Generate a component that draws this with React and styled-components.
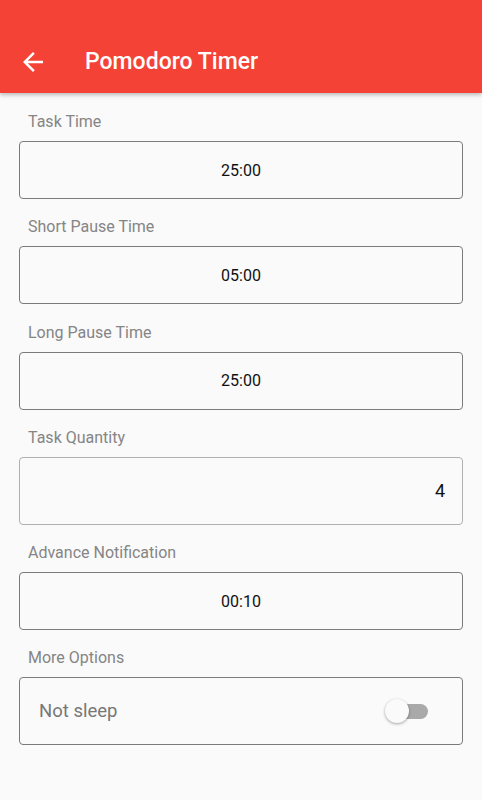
import React, { useState } from "react"
import styled, { createGlobalStyle } from "styled-components"

const GlobalStyle = createGlobalStyle`
  html, body {
    margin: 0;
    padding: 0;
    background: #fafafa;
    font-family: Roboto, "Noto Sans", "Liberation Sans", sans-serif;
  }
`

const Page = styled.div`
  width: 482px;
  min-height: 800px;
  background: #fafafa;
`

const AppBar = styled.header`
  height: 93px;
  box-sizing: border-box;
  padding-top: 47px;
  background: #f44336;
  box-shadow: 0 2px 4px rgba(0, 0, 0, 0.25);
  display: flex;
  align-items: flex-start;
  position: relative;
  z-index: 1;
`

const BackButton = styled.button`
  width: 30px;
  height: 30px;
  margin-left: 18px;
  padding: 0;
  border: none;
  background: none;
  display: flex;
  align-items: center;
  justify-content: center;
  cursor: pointer;
`

const Title = styled.h1`
  margin: 0 0 0 37px;
  font-size: 23px;
  line-height: 30px;
  font-weight: 500;
  color: #fff;
`

const Content = styled.main`
  padding: 19px 19px 0 19px;
  display: flex;
  flex-direction: column;
`

const Section = styled.section`
  display: flex;
  flex-direction: column;
  margin-bottom: 18.3px;
`

const Label = styled.div`
  padding-left: 9px;
  font-size: 16px;
  line-height: 20px;
  color: #858585;
  margin-bottom: 9px;
`

const Field = styled.div`
  box-sizing: border-box;
  height: ${({ tall }) => (tall ? "68px" : "58px")};
  border: 1px solid ${({ light }) => (light ? "#b0b0b0" : "#7a7a7a")};
  border-radius: 4px;
  display: flex;
  align-items: center;
  justify-content: ${({ align }) => align || "center"};
  padding: 0 ${({ align }) => (align === "flex-end" ? "17px" : "19px")};
  font-size: ${({ big }) => (big ? "18px" : "16px")};
  color: #111;
`

const OptionText = styled.span`
  font-size: 18.5px;
  color: #777;
  flex: 1;
`

const SwitchTrack = styled.button`
  position: relative;
  width: 39px;
  height: 15px;
  margin-right: 15px;
  padding: 0;
  border: none;
  border-radius: 8px;
  background: ${({ on }) => (on ? "#f8a29c" : "#a9a9a9")};
  cursor: pointer;
`

const SwitchThumb = styled.span`
  position: absolute;
  top: -5px;
  left: ${({ on }) => (on ? "19px" : "-4px")};
  width: 24px;
  height: 24px;
  border-radius: 50%;
  background: ${({ on }) => (on ? "#f44336" : "#fafafa")};
  box-shadow: 0 1px 3px rgba(0, 0, 0, 0.35);
`

const BackArrow = () => (
  <svg width="30" height="30" viewBox="0 0 24 24">
    <path
      fill="#fff"
      d="M20 11H7.83l5.59-5.59L12 4l-8 8 8 8 1.41-1.41L7.83 13H20v-2z"
    />
  </svg>
)

const fields = [
  { label: "Task Time", value: "25:00" },
  { label: "Short Pause Time", value: "05:00" },
  { label: "Long Pause Time", value: "25:00" },
  { label: "Task Quantity", value: "4", quantity: true },
  { label: "Advance Notification", value: "00:10" },
]

export default function App() {
  const [noSleep, setNoSleep] = useState(false)

  return (
    <Page>
      <GlobalStyle />
      <AppBar>
        <BackButton aria-label="Back">
          <BackArrow />
        </BackButton>
        <Title>Pomodoro Timer</Title>
      </AppBar>
      <Content>
        {fields.map((f) => (
          <Section key={f.label}>
            <Label>{f.label}</Label>
            {f.quantity ? (
              <Field tall light big align="flex-end">
                {f.value}
              </Field>
            ) : (
              <Field>{f.value}</Field>
            )}
          </Section>
        ))}
        <Section>
          <Label>More Options</Label>
          <Field tall align="space-between">
            <OptionText>Not sleep</OptionText>
            <SwitchTrack on={noSleep} onClick={() => setNoSleep(!noSleep)}>
              <SwitchThumb on={noSleep} />
            </SwitchTrack>
          </Field>
        </Section>
      </Content>
    </Page>
  )
}
